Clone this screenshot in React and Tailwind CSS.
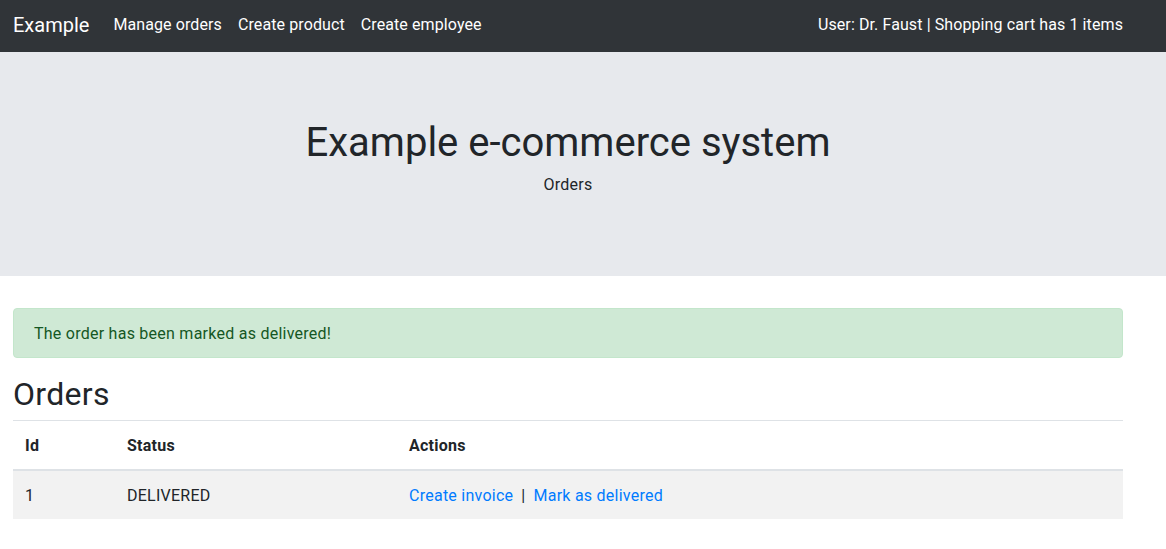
import React from 'react';

export default function App() {
  const navLinks = ['Manage orders', 'Create product', 'Create employee'];

  return (
    <div className="min-h-screen bg-white text-[#212529] font-['Roboto','Liberation_Sans',sans-serif] text-base tracking-[0.25px]">
      {/* Navbar */}
      <nav className="h-[52px] bg-[#303438] flex items-center justify-between pl-[13px] pr-[43px] pb-[2px] tracking-[0.1px]">
        <div className="flex items-center">
          <span className="text-white text-xl mr-4 tracking-normal">Example</span>
          <div className="flex">
            {navLinks.map((l) => (
              <a key={l} className="text-white px-2 leading-6">{l}</a>
            ))}
          </div>
        </div>
        <span className="text-white leading-6">User: Dr. Faust | Shopping cart has 1 items</span>
      </nav>

      {/* Jumbotron */}
      <div className="bg-[#e7e9ed] pt-16 pb-[63px] mb-8">
        <div className="pl-[13px] w-[1123px] text-center">
          <h1 className="text-[40px] leading-[48px] pt-[3px] mb-[6px] tracking-normal">Example e-commerce system</h1>
          <p className="leading-6 mb-4">Orders</p>
        </div>
      </div>

      {/* Content */}
      <div className="pl-[13px] w-[1123px]">
        <div className="bg-[#cfe9d5] border border-[#c3e6cb] text-[#155724] rounded px-5 pt-[13px] pb-[11px] mb-4 leading-6">
          The order has been marked as delivered!
        </div>
        <h2 className="text-[32px] leading-[38px] pt-[1px] mb-[7px] tracking-[0.3px]">Orders</h2>
        <table className="w-full border-collapse text-left">
          <thead>
            <tr className="border-t border-[#dee2e6]">
              <th className="px-3 pt-[13px] pb-[11px] w-[102px] font-bold border-b-2 border-[#dee2e6]">Id</th>
              <th className="px-3 pt-[13px] pb-[11px] w-[282px] font-bold border-b-2 border-[#dee2e6]">Status</th>
              <th className="px-3 pt-[13px] pb-[11px] font-bold border-b-2 border-[#dee2e6]">Actions</th>
            </tr>
          </thead>
          <tbody>
            <tr className="bg-[#f2f2f2]">
              <td className="px-3 pt-[13px] pb-[11px]">1</td>
              <td className="px-3 pt-[13px] pb-[11px]">DELIVERED</td>
              <td className="px-3 pt-[13px] pb-[11px]">
                <a className="text-[#007bff]">Create invoice</a>
                <span className="mx-2">|</span>
                <a className="text-[#007bff]">Mark as delivered</a>
              </td>
            </tr>
          </tbody>
        </table>
      </div>
    </div>
  );
}
